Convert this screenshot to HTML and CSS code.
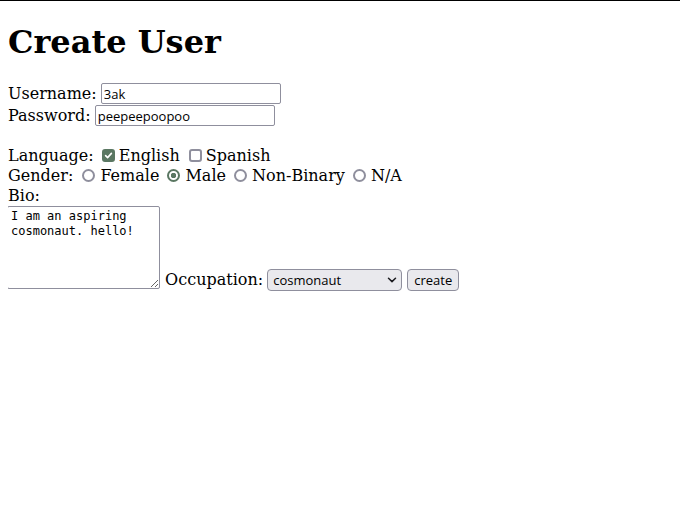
FILE: index.html
```html
<!DOCTYPE html>
<html>
<head>
<meta charset="utf-8">
<link rel="stylesheet" href="styles.css">
</head>
<body>
<div class="topline"></div>
<h1 class="title">Create User</h1>
<form class="user-form">
<div class="row row-field">Username: <input type="text" class="field" value="3ak"></div>
<div class="row row-field">Password: <input type="text" class="field" value="peepeepoopoo"></div>
<div class="spacer"></div>
<div class="row row-choice">Language: <input type="checkbox" class="check" checked>English <input type="checkbox" class="check check-next">Spanish</div>
<div class="row row-choice">Gender: <input type="radio" name="g" class="radio">Female <input type="radio" name="g" class="radio radio-next" checked>Male <input type="radio" name="g" class="radio radio-next">Non-Binary <input type="radio" name="g" class="radio radio-next">N/A</div>
<div class="row">Bio:</div>
<div class="row row-bio"><textarea class="bio">I am an aspiring cosmonaut. hello!</textarea> Occupation: <span class="select-wrap"><select class="occ"><option>cosmonaut</option></select><svg class="chev" width="10" height="6" viewBox="0 0 10 6"><path d="M1.5 1.2 L5 4.6 L8.5 1.2" fill="none" stroke="#1b1b1f" stroke-width="1.5" stroke-linecap="round" stroke-linejoin="round"/></svg></span> <button type="button" class="submit">create</button></div>
</form>
</body>
</html>
```
FILE: styles.css
```css
body {
  margin: 8px;
  font-family: "DejaVu Serif", serif;
  font-size: 16px;
}
.topline {
  position: fixed;
  top: 0;
  left: 0;
  right: 0;
  height: 1px;
  background: #000;
}
.title {
  font-size: 32px;
  margin: 15px 0 22px;
}
.row {
  line-height: 19px;
}
.row-field {
  height: 22px;
}
.spacer {
  height: 19px;
}
.row-choice {
  line-height: 20px;
}
.row-bio {
  padding-top: 1px;
}
.field {
  box-sizing: border-box;
  width: 180px;
  height: 21px;
  border: 1px solid #8f8f9d;
  border-radius: 2px;
  padding: 1px 2px;
  font-family: "Open Sans", sans-serif;
  font-size: 13px;
  color: #000;
  vertical-align: baseline;
  margin: 0 0 0 -1px;
}
.check, .radio {
  appearance: none;
  -webkit-appearance: none;
  box-sizing: border-box;
  width: 13px;
  height: 13px;
  border: 2px solid #8f8f9d;
  background: #fff;
  vertical-align: -1px;
}
.check {
  border-radius: 3px;
  margin: 0 4px 0 3px;
}
.check-next {
  margin-left: 4px;
}
.check:checked {
  border-color: #5a7762;
  background: #5a7762 url("data:image/svg+xml;utf8,<svg xmlns='http://www.w3.org/2000/svg' viewBox='0 0 9 9'><path d='M1.6 4.6 L3.6 6.6 L7.4 2.4' fill='none' stroke='white' stroke-width='1.6' stroke-linecap='round' stroke-linejoin='round'/></svg>") center / 9px 9px no-repeat;
}
.radio {
  border-radius: 50%;
  margin: 0 5px 0 4px;
}
.radio-next {
  margin-left: 3px;
}
.radio:checked {
  border-color: #5a7762;
  background: radial-gradient(circle, #5a7762 0 2.5px, #fff 3px);
}
.bio {
  box-sizing: border-box;
  width: 153px;
  height: 83px;
  border: 1px solid #8f8f9d;
  border-radius: 2px;
  padding: 2px 3px;
  margin: 0 0 0 -1px;
  font-family: "DejaVu Sans Mono", monospace;
  font-size: 12px;
  line-height: 15px;
  color: #000;
  resize: both;
  vertical-align: text-bottom;
}
.select-wrap {
  position: relative;
  display: inline-block;
}
.occ {
  appearance: none;
  -webkit-appearance: none;
  box-sizing: border-box;
  width: 135px;
  height: 22px;
  margin: 0 0 0 -1px;
  border: 1px solid #8f8f9d;
  border-radius: 4px;
  background: #e9e9ed;
  padding: 0 5px;
  font-family: "Open Sans", sans-serif;
  font-size: 13px;
  color: #000;
}
.chev {
  position: absolute;
  right: 5px;
  top: 8px;
  pointer-events: none;
}
.submit {
  box-sizing: border-box;
  height: 22px;
  margin: 0;
  border: 1px solid #8f8f9d;
  border-radius: 4px;
  background: #e9e9ed;
  padding: 0 6px;
  font-family: "Open Sans", sans-serif;
  font-size: 13px;
  color: #000;
}
```
